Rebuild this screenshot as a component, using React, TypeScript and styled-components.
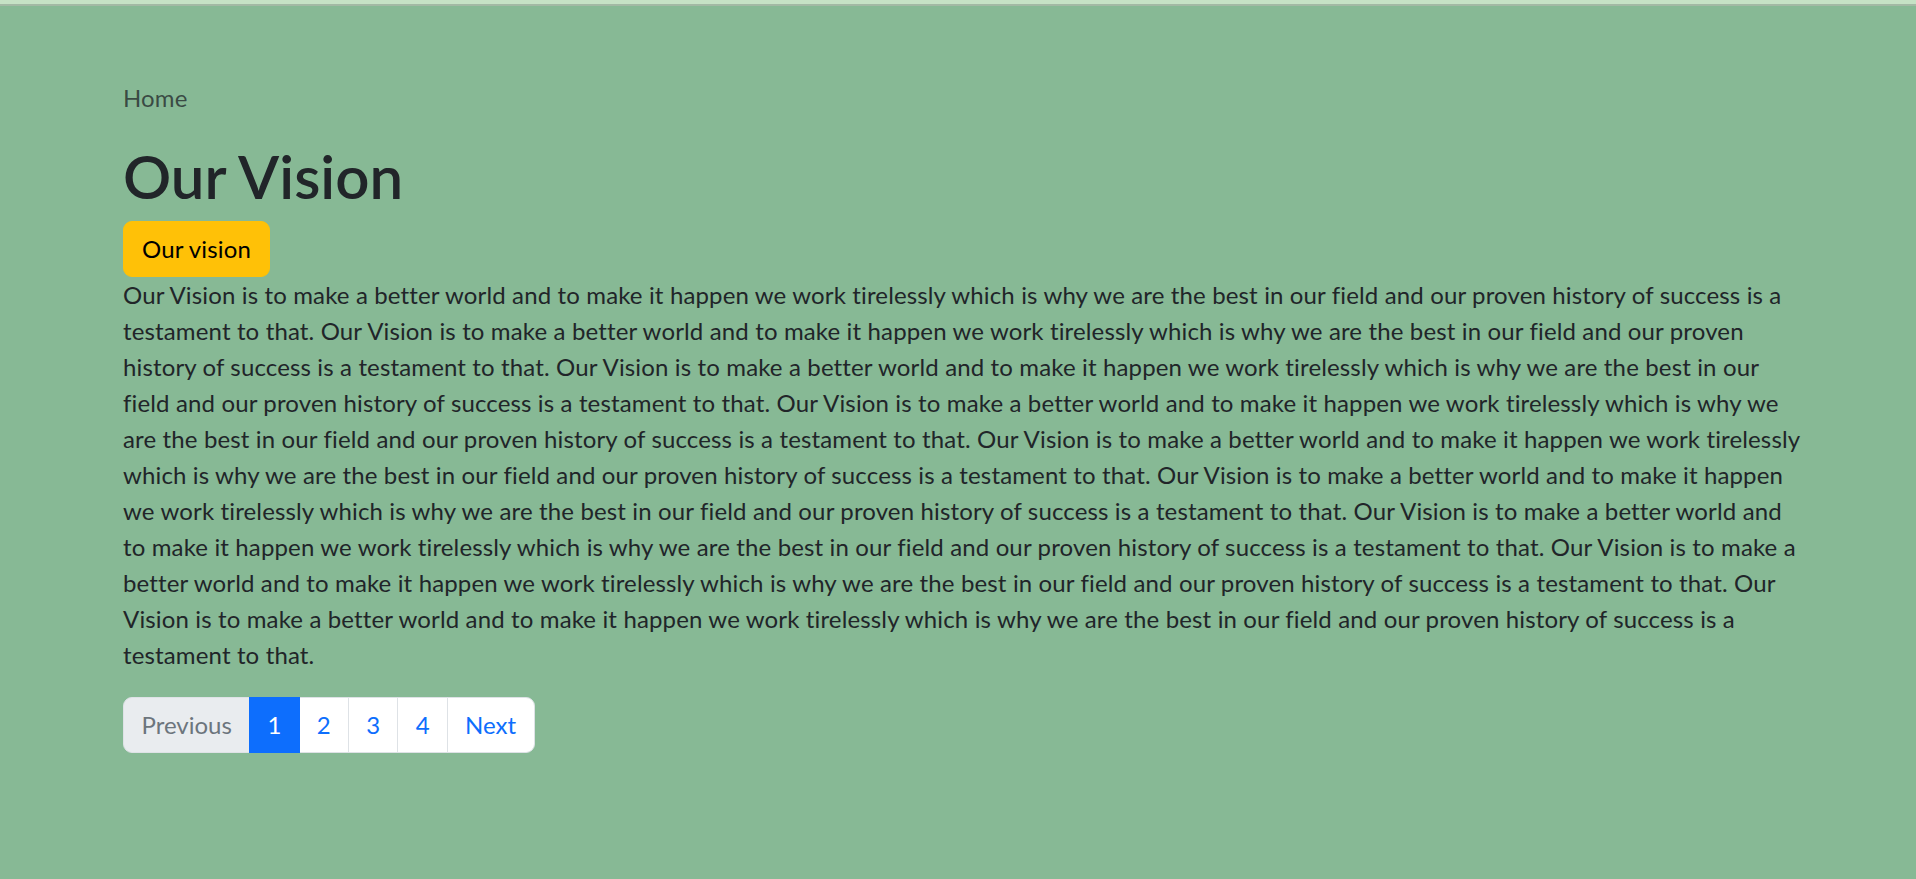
import React from "react";
import styled, { createGlobalStyle } from "styled-components";

const GlobalStyle = createGlobalStyle`
  *, *::before, *::after { box-sizing: border-box; }
  html, body { margin: 0; padding: 0; }
  body {
    background: #87b995;
    font-family: "Lato", "Liberation Sans", sans-serif;
    font-size: 24px;
    line-height: 36px;
    letter-spacing: 0.14px;
    color: #212529;
  }
`;

const TopStrip = styled.div`
  height: 6px;
  background: #c5e2c5;
  border-bottom: 2px solid #a2b9a4;
`;

const Container = styled.main`
  width: 1672px;
  margin-left: 123px;
  padding-top: 74px;
`;

const Breadcrumb = styled.nav`
  color: rgba(33, 37, 41, 0.75);
  margin-bottom: 24px;
`;

const Title = styled.h1`
  margin: 0 0 9px;
  font-size: 60px;
  line-height: 72px;
  font-weight: 600;
  letter-spacing: 0;
  color: #212529;
`;

const WarningButton = styled.button`
  display: block;
  font: inherit;
  letter-spacing: inherit;
  color: #000;
  background: #ffc107;
  border: 1.5px solid #ffc107;
  border-radius: 9px;
  padding: 9px 18px;
  cursor: pointer;
`;

const Paragraph = styled.p`
  margin: 0 0 24px;
  white-space: nowrap;
`;

const Pagination = styled.ul`
  display: flex;
  list-style: none;
  margin: 0;
  padding: 0;
  letter-spacing: 0;
`;

const PageItem = styled.li<{ $state?: "active" | "disabled" }>`
  margin-left: -1.5px;
  &:first-child {
    margin-left: 0;
  }
  & > span {
    display: block;
    padding: 9px 17.5px;
    border: 1.5px solid
      ${(p) => (p.$state === "active" ? "#0d6efd" : "#dee2e6")};
    background: ${(p) =>
      p.$state === "active" ? "#0d6efd" : p.$state === "disabled" ? "#e9ecef" : "#ffffff"};
    color: ${(p) =>
      p.$state === "active" ? "#ffffff" : p.$state === "disabled" ? "#6c757d" : "#0d6efd"};
    position: relative;
    z-index: ${(p) => (p.$state === "active" ? 1 : 0)};
  }
  &:first-child > span {
    border-radius: 9px 0 0 9px;
  }
  &:last-child > span {
    border-radius: 0 9px 9px 0;
  }
`;

const lines = [
  "Our Vision is to make a better world and to make it happen we work tirelessly which is why we are the best in our field and our proven history of success is a",
  "testament to that. Our Vision is to make a better world and to make it happen we work tirelessly which is why we are the best in our field and our proven",
  "history of success is a testament to that. Our Vision is to make a better world and to make it happen we work tirelessly which is why we are the best in our",
  "field and our proven history of success is a testament to that. Our Vision is to make a better world and to make it happen we work tirelessly which is why we",
  "are the best in our field and our proven history of success is a testament to that. Our Vision is to make a better world and to make it happen we work tirelessly",
  "which is why we are the best in our field and our proven history of success is a testament to that. Our Vision is to make a better world and to make it happen",
  "we work tirelessly which is why we are the best in our field and our proven history of success is a testament to that. Our Vision is to make a better world and",
  "to make it happen we work tirelessly which is why we are the best in our field and our proven history of success is a testament to that. Our Vision is to make a",
  "better world and to make it happen we work tirelessly which is why we are the best in our field and our proven history of success is a testament to that. Our",
  "Vision is to make a better world and to make it happen we work tirelessly which is why we are the best in our field and our proven history of success is a",
  "testament to that.",
];

const pages: { label: string; state?: "active" | "disabled" }[] = [
  { label: "Previous", state: "disabled" },
  { label: "1", state: "active" },
  { label: "2" },
  { label: "3" },
  { label: "4" },
  { label: "Next" },
];

export default function App() {
  return (
    <>
      <GlobalStyle />
      <TopStrip />
      <Container>
        <Breadcrumb>Home</Breadcrumb>
        <Title>Our Vision</Title>
        <WarningButton type="button">Our vision</WarningButton>
        <Paragraph>
          {lines.map((l, i) => (
            <React.Fragment key={i}>
              {l}
              {i < lines.length - 1 && <br />}
            </React.Fragment>
          ))}
        </Paragraph>
        <Pagination>
          {pages.map((p) => (
            <PageItem key={p.label} $state={p.state}>
              <span>{p.label}</span>
            </PageItem>
          ))}
        </Pagination>
      </Container>
    </>
  );
}
